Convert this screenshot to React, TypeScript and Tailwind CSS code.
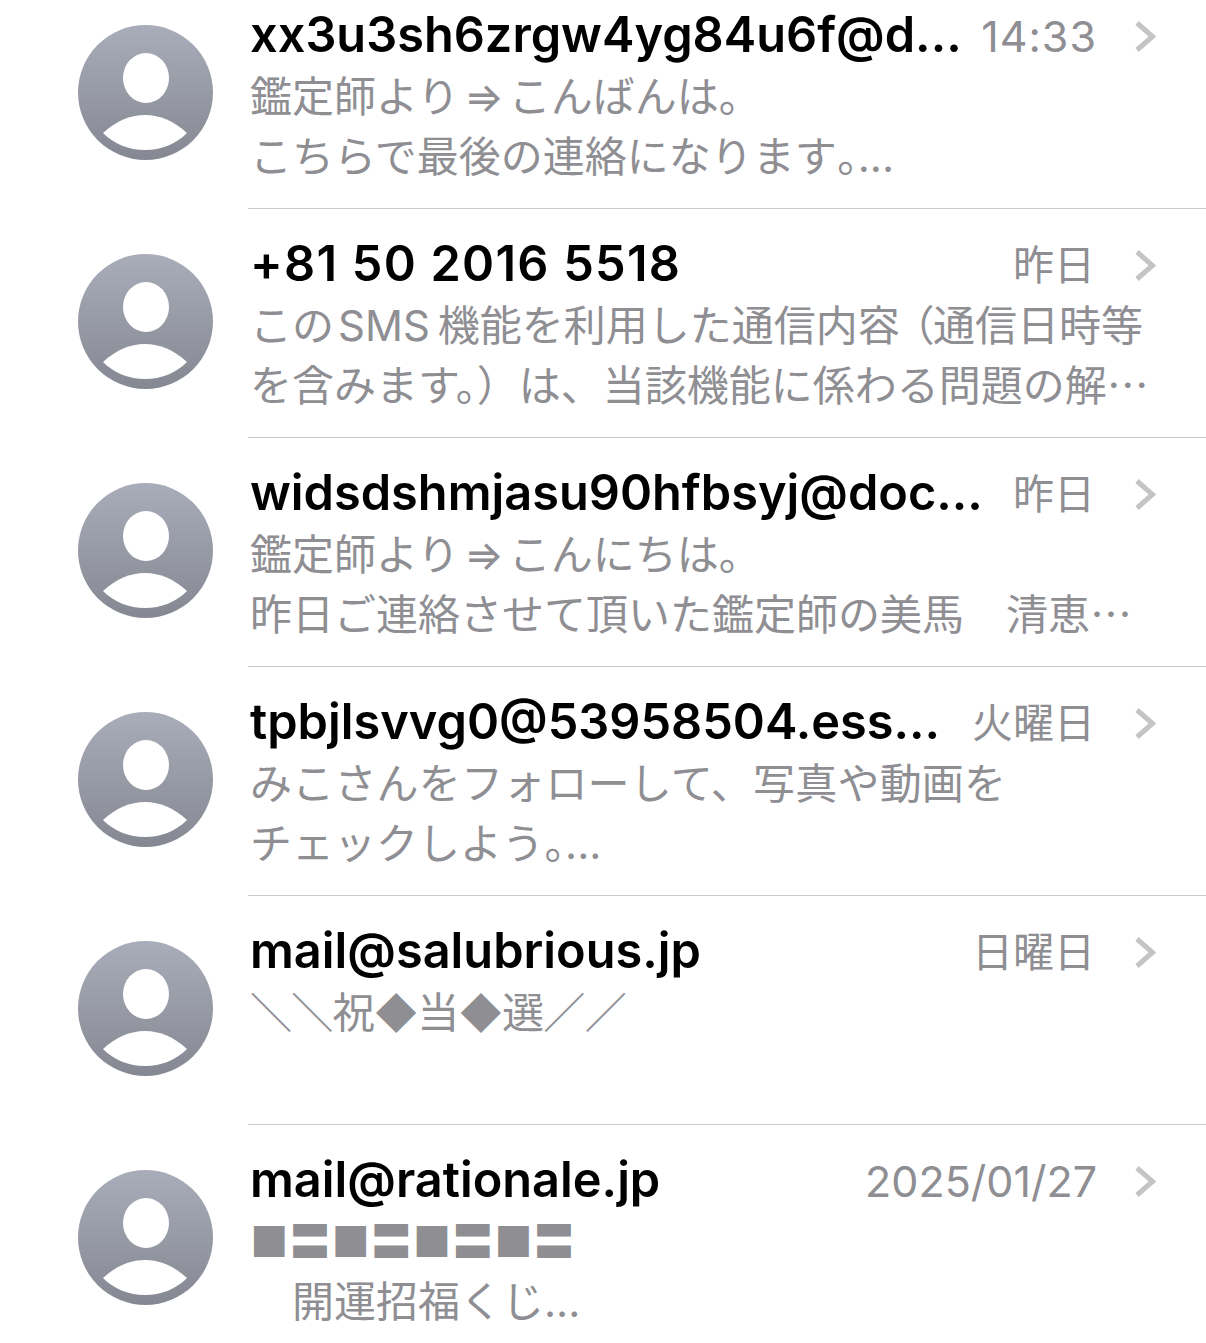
const rows = [
  { name: 'xx3u3sh6zrgw4yg84u6f@d...', nameClass: '', time: '14:33', timeClass: 'text-[43px] tracking-[1px]', lines: [<span className="[word-spacing:-7px]">鑑定師より ⇒ こんばんは。</span>, <>こちらで最後の連絡になります<Stop />...</>] },
  { name: '+81 50 2016 5518', nameClass: 'tracking-[1.25px]', time: '昨日', timeClass: 'text-[41px] mr-[2px]', lines: [<>この<span className="ml-[4px] mr-[8px]">SMS</span>機能を利用した通信内容<span className="ml-[12px] [font-feature-settings:'palt']">（</span>通信日時等</>, <>を含みます。）は、当該機能に係わる問題の解<Dots /></>] },
  { name: 'widsdshmjasu90hfbsyj@doc...', nameClass: '', time: '昨日', timeClass: 'text-[41px] mr-[2px]', lines: [<span className="[word-spacing:-7px]">鑑定師より ⇒ こんにちは。</span>, <>昨日ご連絡させて頂いた鑑定師の美馬　清恵<Dots /></>] },
  { name: 'tpbjlsvvg0@53958504.ess...', nameClass: '', time: '火曜日', timeClass: 'text-[41px] mr-[2px]', lines: [<span className="tracking-[0.2px]">みこさんをフォローして、写真や動画を</span>, <>チェックしよう<Stop />...</>] },
  { name: 'mail@salubrious.jp', nameClass: '', time: '日曜日', timeClass: 'text-[41px] mr-[2px]', lines: [<span className="tracking-[-0.7px]">＼＼祝◆当◆選／／</span>, <>&nbsp;</>] },
  { name: 'mail@rationale.jp', nameClass: '', time: '2025/01/27', timeClass: 'text-[43px]', lines: [<span className="tracking-[0.5px]">■〓■〓■〓■〓</span>, <>　開運招福くじ...</>] },
];

function Stop() {
  return <span className="[font-feature-settings:'palt']">。</span>;
}

function Dots() {
  return <span className="leading-[0] font-['Noto_Sans_CJK_JP',sans-serif]">…</span>;
}

function Avatar() {
  return (
    <svg width="135" height="135" viewBox="0 0 135 135" className="shrink-0">
      <defs>
        <linearGradient id="av" x1="0" y1="0" x2="0" y2="1">
          <stop offset="0" stopColor="#a9adb9" />
          <stop offset="1" stopColor="#858892" />
        </linearGradient>
      </defs>
      <circle cx="67.5" cy="67.5" r="67.5" fill="url(#av)" />
      <ellipse cx="68" cy="53" rx="23" ry="25" fill="#fff" />
      <path d="M25 108 C38 96 52 90 67 90 C82 90 96 96 109 108 C98 119 83 125 67 125 C51 125 36 119 25 108 Z" fill="#fff" />
    </svg>
  );
}

function Chevron() {
  return (
    <svg width="22" height="33" viewBox="0 0 22 33" className="shrink-0 ml-[37px] mr-[50px]">
      <path d="M3 3 L18.5 16.5 L3 30" fill="none" stroke="#c4c4c7" strokeWidth="5" />
    </svg>
  );
}

export default function App() {
  return (
    <div className="w-[1206px] h-[1343px] overflow-hidden bg-white font-['Inter','Liberation_Sans','Noto_Sans_CJK_JP',sans-serif]">
      <div className="-mt-[20px]">
        {rows.map((r) => (
          <div key={r.name} className="flex h-[229px]">
            <div className="w-[248px] pl-[78px] pt-[45px]">
              <Avatar />
            </div>
            <div className="flex-1 min-w-0 border-b border-[#c9c9cc] pl-[2px] pt-[26px]">
              <div className="flex items-center h-[61px]">
                <div className={`flex-1 min-w-0 text-[48.7px] leading-[60px] pb-[4px] font-semibold text-black whitespace-nowrap ${r.nameClass}`}>{r.name}</div>
                <div className={`text-[#8e8e93] ${r.timeClass}`}>{r.time}</div>
                <Chevron />
              </div>
              <div className="text-[42px] leading-[60px] text-[#8e8e93] whitespace-nowrap overflow-hidden">
                <div>{r.lines[0]}</div>
                <div>{r.lines[1]}</div>
              </div>
            </div>
          </div>
        ))}
      </div>
    </div>
  );
}
